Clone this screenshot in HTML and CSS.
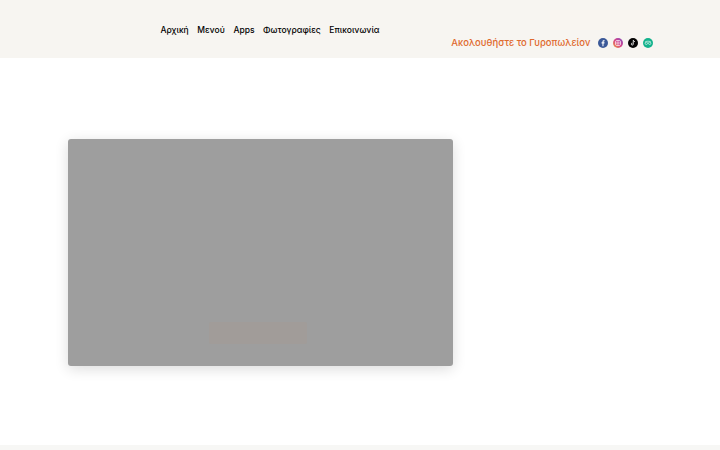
FILE: index.html
```html
<!DOCTYPE html>
<html lang="el">
<head>
<meta charset="utf-8">
<title>Γυροπωλείον</title>
<link rel="stylesheet" href="styles.css">
</head>
<body>
<header class="header">
  <nav class="nav">
    <a class="nav-link">Αρχική</a>
    <a class="nav-link">Μενού</a>
    <a class="nav-link">Apps</a>
    <a class="nav-link">Φωτογραφίες</a>
    <a class="nav-link">Επικοινωνία</a>
  </nav>
  <div class="header-right">
    <div class="order-btn"></div>
    <div class="follow">
      <span class="follow-text">Ακολουθήστε το Γυροπωλείον</span>
      <div class="socials">
        <svg class="icon" viewBox="0 0 10 10"><circle cx="5" cy="5" r="5" fill="#3b5998"/><path d="M5.5 8.2V5.4h.9l.15-1.1H5.5v-.6c0-.35.1-.55.55-.55h.55V2.2c-.15 0-.45-.05-.8-.05-.8 0-1.35.5-1.35 1.4v.75h-.9v1.1h.9v2.8z" fill="#fff"/></svg>
        <svg class="icon" viewBox="0 0 10 10"><defs><linearGradient id="ig" x1="0" y1="1" x2="1" y2="0"><stop offset="0" stop-color="#f0a13c"/><stop offset=".5" stop-color="#d6418a"/><stop offset="1" stop-color="#7a4fc0"/></linearGradient></defs><circle cx="5" cy="5" r="5" fill="url(#ig)"/><rect x="2.5" y="2.5" width="5" height="5" rx="1.4" fill="none" stroke="#fff" stroke-width=".7"/><circle cx="5" cy="5" r="1.2" fill="none" stroke="#fff" stroke-width=".7"/></svg>
        <svg class="icon" viewBox="0 0 10 10"><circle cx="5" cy="5" r="5" fill="#050505"/><path d="M5.3 2.2v3.9a1 1 0 1 1-.8-1M5.3 2.2c.1.8.7 1.4 1.6 1.5" fill="none" stroke="#fff" stroke-width=".8"/></svg>
        <svg class="icon" viewBox="0 0 10 10"><circle cx="5" cy="5" r="5" fill="#12b28c"/><circle cx="3.3" cy="5.3" r="1.2" fill="none" stroke="#fff" stroke-width=".6"/><circle cx="6.7" cy="5.3" r="1.2" fill="none" stroke="#fff" stroke-width=".6"/><path d="M2.2 3.8c1.6-.8 4-.8 5.6 0" fill="none" stroke="#fff" stroke-width=".6"/></svg>
      </div>
    </div>
  </div>
</header>
<main class="main">
  <section class="card">
    <div class="card-btn"></div>
  </section>
</main>
<footer class="footer"></footer>
</body>
</html>
```

FILE: styles.css
```css
* { box-sizing: border-box; }
html, body { height: 100%; }
body {
  margin: 0;
  background: #fff;
  font-family: Inter, Roboto, sans-serif;
  display: flex;
  flex-direction: column;
  overflow: hidden;
}
.header {
  height: 58px;
  background: #f7f5f1;
  display: flex;
  justify-content: space-between;
  padding: 10px 67px 0 160.4px;
  flex: none;
}
.nav {
  display: flex;
  gap: 8.6px;
  padding-top: 13px;
  align-items: flex-start;
}
.nav-link {
  font-size: 8.5px;
  font-weight: 500;
  line-height: 14px;
  color: #000;
}
.header-right {
  display: flex;
  flex-direction: column;
  align-items: flex-end;
}
.order-btn {
  width: 100px;
  height: 20px;
  margin-right: 3px;
  background: #f9f5f0;
  border-radius: 2px;
}
.follow {
  display: flex;
  align-items: center;
  gap: 7.5px;
  margin-top: 6px;
}
.follow-text {
  font-size: 9.5px;
  font-weight: 500;
  line-height: 14px;
  color: #e06a2e;
}
.socials {
  display: flex;
  gap: 5px;
}
.icon {
  width: 10px;
  height: 10px;
  display: block;
}
.main {
  flex: 1;
  padding: 80.5px 0 0 67.5px;
}
.card {
  width: 385px;
  height: 227px;
  background: #9e9e9e;
  border-radius: 3px;
  box-shadow: 0 3px 14px rgba(0, 0, 0, .14);
  display: flex;
  flex-direction: column;
  align-items: center;
  justify-content: flex-end;
  padding: 0 5px 22px 0;
}
.card-btn {
  width: 98px;
  height: 22px;
  background: #a19c99;
  border-radius: 2px;
}
.footer {
  height: 5px;
  background: #f7f7f5;
  flex: none;
}
```
